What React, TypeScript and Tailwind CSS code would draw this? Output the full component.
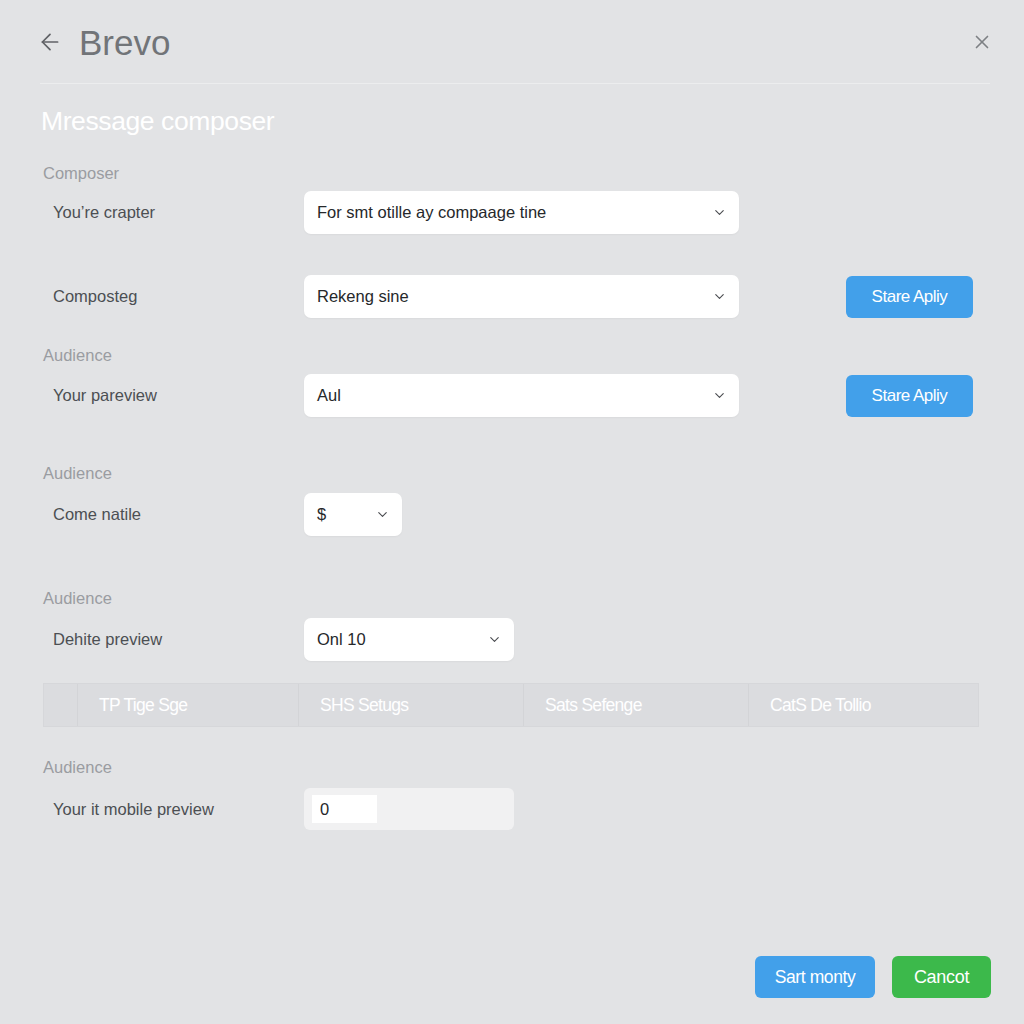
import { ArrowLeft, X, ChevronDown } from 'lucide-react';

const font = { fontFamily: '"Liberation Sans", Arial, sans-serif' };

function Select({ value, width }: { value: string; width: string }) {
  return (
    <div
      className={`${width} h-[43px] bg-white rounded-[7px] shadow-[0_1px_2px_rgba(0,0,0,0.04)] flex items-center justify-between pl-[13px] pr-[12px]`}
    >
      <span className="text-[16.5px] text-[#26282b]">{value}</span>
      <ChevronDown className="w-[15px] h-[15px] text-[#4a4c50]" strokeWidth={1.8} />
    </div>
  );
}

function SectionLabel({ children, className = '' }: { children: string; className?: string }) {
  return <div className={`text-[16.5px] leading-[20px] text-[#9a9ca1] ${className}`}>{children}</div>;
}

function RowLabel({ children }: { children: string }) {
  return <div className="w-[261px] pl-[10px] text-[16.5px] text-[#4c4f53] shrink-0">{children}</div>;
}

function BlueButton({ children }: { children: string }) {
  return (
    <button className="ml-auto w-[127px] h-[42px] rounded-[6px] bg-[#42a0ea] text-white text-[17px] tracking-[-0.5px]">
      {children}
    </button>
  );
}

export default function App() {
  const tabs = ['TP Tige Sge', 'SHS Setugs', 'Sats Sefenge', 'CatS De Tollio'];

  return (
    <div className="w-[1024px] h-[1024px] bg-[#e2e3e5] overflow-hidden" style={font}>
      {/* header */}
      <div className="flex items-center pl-[37px] pr-[31px] pt-[22px] h-[62px]">
        <ArrowLeft className="w-[26px] h-[26px] text-[#606266]" strokeWidth={1.6} />
        <span className="ml-[16px] text-[35px] leading-none text-[#717478]">Brevo</span>
        <X className="ml-auto w-[22px] h-[22px] text-[#7d8084]" strokeWidth={1.8} />
      </div>
      <div className="mt-[21px] ml-[40px] mr-[34px] h-px bg-[#ecedee]" />

      <div className="pl-[43px] pr-[45px]">
        <div className="mt-[22px] -ml-[2px] text-[26.5px] leading-[30px] text-white tracking-[-0.4px]">
          Mressage composer
        </div>

        <SectionLabel className="mt-[27px]">Composer</SectionLabel>
        <div className="mt-[8px] flex items-center">
          <RowLabel>You’re crapter</RowLabel>
          <Select value="For smt otille ay compaage tine" width="w-[435px]" />
        </div>
        <div className="mt-[41px] flex items-center pr-[6px]">
          <RowLabel>Composteg</RowLabel>
          <Select value="Rekeng sine" width="w-[435px]" />
          <BlueButton>Stare Apliy</BlueButton>
        </div>

        <SectionLabel className="mt-[27px]">Audience</SectionLabel>
        <div className="mt-[9px] flex items-center pr-[6px]">
          <RowLabel>Your pareview</RowLabel>
          <Select value="Aul" width="w-[435px]" />
          <BlueButton>Stare Apliy</BlueButton>
        </div>

        <SectionLabel className="mt-[46px]">Audience</SectionLabel>
        <div className="mt-[10px] flex items-center">
          <RowLabel>Come natile</RowLabel>
          <Select value="$" width="w-[98px]" />
        </div>

        <SectionLabel className="mt-[52px]">Audience</SectionLabel>
        <div className="mt-[10px] flex items-center">
          <RowLabel>Dehite preview</RowLabel>
          <Select value="Onl 10" width="w-[210px]" />
        </div>

        {/* table header */}
        <div className="mt-[22px] h-[44px] flex bg-[#dbdcdf] border border-[#d6d7da]">
          <div className="w-[34px] border-r border-[#d3d4d7]" />
          {tabs.map((t, i) => (
            <div
              key={t}
              className={`${i === 3 ? 'flex-1' : i === 0 ? 'w-[221px] border-r' : 'w-[225px] border-r'} border-[#d3d4d7] flex items-center pl-[21px] text-[17.5px] text-white tracking-[-0.7px]`}
            >
              {t}
            </div>
          ))}
        </div>

        <SectionLabel className="mt-[30px]">Audience</SectionLabel>
        <div className="mt-[11px] flex items-center">
          <RowLabel>Your it mobile preview</RowLabel>
          <div className="w-[210px] h-[42px] bg-[#f1f1f2] rounded-[6px] flex items-center pl-[8px]">
            <div className="w-[65px] h-[28px] bg-white flex items-center pl-[8px] text-[16.5px] text-[#26282b]">
              0
            </div>
          </div>
        </div>

        {/* footer */}
        <div className="mt-[126px] flex justify-end gap-[17px] -mr-[12px]">
          <button className="w-[120px] h-[42px] rounded-[6px] bg-[#42a0ea] text-white text-[17.5px] tracking-[-0.4px]">
            Sart monty
          </button>
          <button className="w-[99px] h-[42px] rounded-[6px] bg-[#3cb94b] text-white text-[18px] tracking-[-0.3px]">
            Cancot
          </button>
        </div>
      </div>
    </div>
  );
}
